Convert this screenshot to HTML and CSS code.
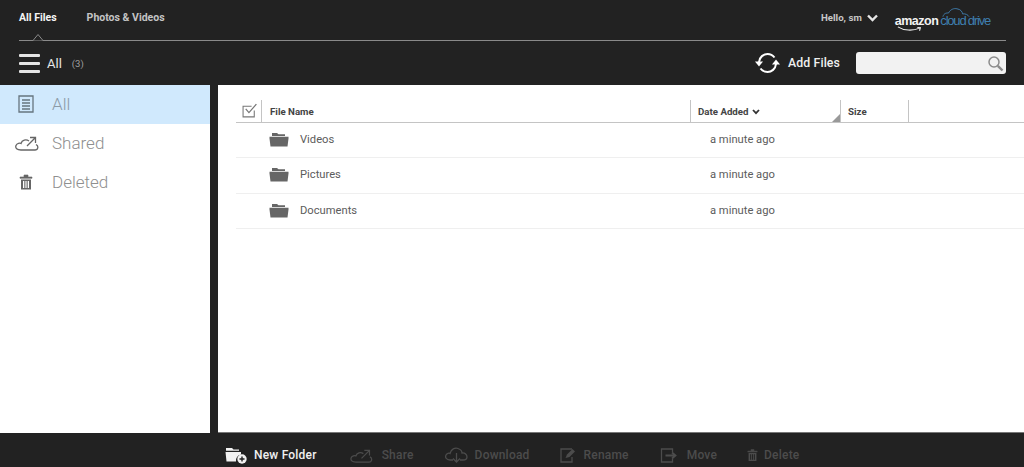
FILE: index.html
```html
<!DOCTYPE html>
<html lang="en">
<head>
<meta charset="utf-8">
<title>Amazon Cloud Drive</title>
<link rel="stylesheet" href="styles.css">
</head>
<body>
<div class="app">
  <header class="header">
    <div class="topbar">
      <nav class="tabs">
        <span class="tab tab-active">All Files</span>
        <span class="tab">Photos &amp; Videos</span>
      </nav>
      <div class="account">
        <span class="hello">Hello, sm</span>
        <svg class="chev" width="11" height="8" viewBox="0 0 11 8"><path d="M1 1.5l4.5 4.5L10 1.5" fill="none" stroke="#e6e6e6" stroke-width="2.4"/></svg>
        <span class="logo"><span class="logo-amazon">amazon</span><span class="logo-cloud">cloud drive</span>
          <svg class="logo-smile" width="30" height="8" viewBox="0 0 30 8"><path d="M1 1.5C8 6 18 6.500 26 3M23.500 2.200L27 2.500L26 6" fill="none" stroke="#f2f2f2" stroke-width="1.200"/></svg>
          <svg class="logo-arc" width="30" height="11" viewBox="0 0 30 11"><path d="M1 10C2 6 5 6 7 6C9 2 13 0.800 16 1.500C20 2 22 5 22 7C25 6.500 28 8 29 10" fill="none" stroke="#3f7fb0" stroke-width="1"/></svg>
        </span>
      </div>
      <svg class="notch" width="20" height="8" viewBox="0 0 20 8"><path d="M0 7.500H5L10 1.500L15 7.500H20" fill="#222" stroke="#8a8a8a" stroke-width="1"/></svg>
    </div>
    <div class="toolbar">
      <div class="crumb">
        <span class="burger"><i></i><i></i><i></i></span>
        <span class="crumb-title">All</span>
        <span class="crumb-count">(3)</span>
      </div>
      <div class="actions">
        <svg class="sync" width="25" height="22" viewBox="0 0 25 22"><g fill="none" stroke="#fff" stroke-width="2"><path d="M4 10C4.500 5 8.500 2 12.500 2C15.500 2 18 3.500 19.500 5.500"/><path d="M21 12C20.500 17 16.500 20 12.500 20C9.500 20 7 18.500 5.500 16.500"/></g><path d="M0 9.500H8L4 14.500Z" fill="#fff"/><path d="M25 12.500H17L21 7.500Z" fill="#fff"/></svg>
        <span class="add">Add Files</span>
        <div class="search">
          <svg width="17" height="17" viewBox="0 0 17 17"><circle cx="7" cy="7" r="5" fill="none" stroke="#8c8c8c" stroke-width="1.500"/><path d="M10.800 10.800L15.500 15.500" stroke="#8c8c8c" stroke-width="2.400"/></svg>
        </div>
      </div>
    </div>
  </header>
  <div class="body">
    <aside class="side">
      <div class="side-item side-active">
        <span class="side-icon"><svg width="16" height="18" viewBox="0 0 16 18"><path d="M1 1H15V17H1ZM4 5H12M4 8H12M4 11H12M4 14H12" fill="none" stroke="#66757f" stroke-width="1.300"/></svg></span>
        <span>All</span>
      </div>
      <div class="side-item">
        <span class="side-icon"><svg width="24" height="16" viewBox="0 0 24 16"><path d="M6 15H20C23 15 24 11 21 9.500M6 15C2 15 0 13 1 10.500C2 8 5 8 6 8.500C7 5 11 4 14 6M12 11L20 3M15 2.500H20.500V8" fill="none" stroke="#666" stroke-width="1.300"/></svg></span>
        <span>Shared</span>
      </div>
      <div class="side-item">
        <span class="side-icon"><svg width="14" height="16" viewBox="0 0 14 16"><path d="M1 3H13V4.300H1ZM5 3V1H9V3" fill="#666" stroke="#666" stroke-width=".6"/><path d="M2 5.500H12V15.500H2Z M4 7V14H5.300V7Z M6.400 7V14H7.600V7Z M8.700 7V14H10V7Z" fill="#666" fill-rule="evenodd"/></svg></span>
        <span>Deleted</span>
      </div>
    </aside>
    <main class="main">
      <div class="thead">
        <div class="th th-check"><svg width="16" height="15" viewBox="0 0 15 14"><path d="M11.500 7V13H1V3H9" fill="none" stroke="#777" stroke-width="1"/><path d="M3.500 5.500L6.500 9L13.500 1" fill="none" stroke="#777" stroke-width="1.200"/></svg></div>
        <div class="th th-name">File Name</div>
        <div class="th th-date">Date Added
          <svg class="sort" width="8" height="6" viewBox="0 0 8 6"><path d="M1 1L4 4.200L7 1" fill="none" stroke="#333" stroke-width="1.800"/></svg>
          <svg class="grip" width="8" height="8" viewBox="0 0 8 8"><path d="M8 0V8H0Z" fill="#999"/></svg>
        </div>
        <div class="th th-size">Size</div>
      </div>
      <div class="row"><span class="cell-name"><svg class="folder" width="20" height="15" viewBox="0 0 20 15"><use href="#folder"/></svg>Videos</span><span class="cell-date">a minute ago</span></div>
      <div class="row"><span class="cell-name"><svg class="folder" width="20" height="15" viewBox="0 0 20 15"><use href="#folder"/></svg>Pictures</span><span class="cell-date">a minute ago</span></div>
      <div class="row"><span class="cell-name"><svg class="folder" width="20" height="15" viewBox="0 0 20 15"><use href="#folder"/></svg>Documents</span><span class="cell-date">a minute ago</span></div>
    </main>
  </div>
  <footer class="footer">
    <div class="fbtn fbtn-on">
      <svg width="23" height="18" viewBox="0 0 23 18"><path d="M1 2H7L8.500 3.500H14V4.800H1ZM0.500 6H16V8.500A6 6 0 0 0 11 15.500H1.500Z" fill="#f2f2f2"/><circle cx="17" cy="13" r="4.700" fill="#f2f2f2"/><path d="M14.500 13H19.500M17 10.500V15.500" stroke="#222" stroke-width="1.400"/></svg>
      <span>New Folder</span>
    </div>
    <div class="fbtn fbtn-share">
      <svg width="23" height="15" viewBox="0 0 24 16"><path d="M6 15H20C23 15 24 11 21 9.500M6 15C2 15 0 13 1 10.500C2 8 5 8 6 8.500C7 5 11 4 14 6M12 11L20 3M15 2.500H20.500V8" fill="none" stroke="#4c4c4c" stroke-width="1.300"/></svg>
      <span>Share</span>
    </div>
    <div class="fbtn fbtn-download">
      <svg width="23" height="16" viewBox="0 0 23 16"><path d="M8 13H5C1 13 0 10 1 8C2 6 4 6 5 6.500C6 2 10 .5 13 1.500C16 2.500 17 5 17 6C20 5.500 22 8 22 10C22 12 20 13 18 13H15M11.500 6V15M8 11.500L11.500 15L15 11.500" fill="none" stroke="#4c4c4c" stroke-width="1.300"/></svg>
      <span>Download</span>
    </div>
    <div class="fbtn fbtn-rename">
      <svg width="17" height="15" viewBox="0 0 17 15"><path d="M12 1H1V14H12V9" fill="none" stroke="#4c4c4c" stroke-width="1.300"/><path d="M5.500 10L7 6.500L12.500 1L15 3.500L9.500 9Z" fill="#4c4c4c"/></svg>
      <span>Rename</span>
    </div>
    <div class="fbtn fbtn-move">
      <svg width="19" height="15" viewBox="0 0 18 15"><path d="M12 4V1H1V14H12V11" fill="none" stroke="#4c4c4c" stroke-width="1.300"/><path d="M5 7.500H14M11.500 4.500L15 7.500L11.500 10.500" fill="none" stroke="#4c4c4c" stroke-width="1.800"/></svg>
      <span>Move</span>
    </div>
    <div class="fbtn fbtn-delete">
      <svg width="11" height="14" viewBox="0 0 14 16"><path d="M1 3H13V4.300H1ZM5 3V1H9V3" fill="#4c4c4c" stroke="#4c4c4c" stroke-width=".6"/><path d="M2 5.500H12V15.500H2Z M4 7V14H5.300V7Z M6.400 7V14H7.600V7Z M8.700 7V14H10V7Z" fill="#4c4c4c" fill-rule="evenodd"/></svg>
      <span>Delete</span>
    </div>
  </footer>
</div>
<svg class="defs" width="0" height="0"><defs><g id="folder"><path d="M3 1H8L9.500 2.200H16V4H3Z" fill="#666"/><path d="M0.500 4.800H19.500V6.500L18.500 14.500H1.500L0.500 6.500Z" fill="#666"/></g></defs></svg>
</body>
</html>
```
FILE: styles.css
```css
* { box-sizing: border-box; }
html, body { margin: 0; height: 100%; }
body { font-family: Roboto, "Liberation Sans", sans-serif; background: #222; overflow: hidden; }
.app { width: 1024px; height: 467px; display: flex; flex-direction: column; background: #222; }

.header { height: 85px; flex: none; display: flex; flex-direction: column; }
.topbar { position: relative; height: 41px; margin: 0 18px 0 19px; display: flex; justify-content: space-between; border-bottom: 1px solid #8a8a8a; }
.tabs { display: flex; gap: 30px; padding-top: 11px; }
.tab { font-size: 10.5px; font-weight: 700; line-height: 13px; color: #c4c4c4; }
.tab-active { color: #f5f5f5; }
.notch { position: absolute; left: 9px; bottom: -1px; }
.account { display: flex; align-items: flex-start; padding-top: 12px; padding-right: 16px; }
.hello { font-size: 9.700px; font-weight: 700; line-height: 12px; color: #c8c8c8; }
.chev { margin: 2px 0 0 5px; }
.logo { position: relative; margin-left: 17px; display: flex; align-items: baseline; white-space: nowrap; height: 18px; line-height: 18px; }
.logo-amazon { font-family: "Liberation Sans", sans-serif; font-size: 12.500px; font-weight: 700; color: #f2f2f2; letter-spacing: -.5px; }
.logo-cloud { font-family: "Liberation Sans", sans-serif; font-size: 13px; color: #3f7fb0; margin-left: 2px; letter-spacing: -1.200px; }
.logo-smile { position: absolute; left: 2px; top: 13px; width: 26px; }
.logo-arc { position: absolute; left: 47px; top: -5px; width: 28px; }

.toolbar { flex: 1; display: flex; justify-content: space-between; align-items: center; padding: 0 18px 0 19px; }
.crumb { display: flex; align-items: center; }
.burger { display: flex; flex-direction: column; gap: 5px; width: 21px; }
.burger i { display: block; height: 3px; border-radius: 1px; background: #e4e4e4; }
.crumb-title { margin-left: 7px; font-size: 13px; font-weight: 400; color: #e6e6e6; }
.crumb-count { margin-left: 10px; font-size: 9.500px; color: #a0a0a0; }
.actions { display: flex; align-items: center; }
.add { margin-left: 8px; font-size: 12.300px; font-weight: 500; letter-spacing: .1px; color: #efefef; }
.search { width: 150px; height: 22px; margin-left: 16px; padding-right: 2px; border-radius: 3px; background: #f2f2f2; display: flex; justify-content: flex-end; align-items: center; }

.body { flex: 1; min-height: 0; display: flex; gap: 8px; }
.side { width: 210px; flex: none; background: #fff; }
.side-item { height: 39px; display: flex; align-items: center; padding: 0 0 2px 15px; font-size: 17px; font-weight: 300; color: #8f8f8f; }
.side-active { background: #d0e9fd; color: #8c9aa6; }
.side-icon { width: 37px; display: flex; justify-content: flex-start; }
.side-item:first-child .side-icon { padding-left: 3px; }
.side-item:last-child .side-icon { padding-left: 4px; }
.main { flex: 1; background: #fff; padding: 15px 0 0 18px; border-bottom: 1px solid #777; }
.thead { display: flex; height: 23px; border-bottom: 1px solid #c4c4c4; }
.th { position: relative; font-size: 9.700px; font-weight: 700; color: #444; line-height: 22px; border-right: 1px solid #c4c4c4; padding-top: 1px; padding-left: 7px; }
.th-check { width: 26px; padding: 3px 0 0 6px; line-height: 0; }
.th-name { width: 429px; padding-left: 8px; }
.th-date { width: 150px; }
.th-size { width: 68px; }
.sort { margin-left: 1px; }
.grip { position: absolute; right: 0; bottom: 0; }
.row { height: 35.340px; display: flex; align-items: center; padding-bottom: 1px; border-bottom: 1px solid #efefef; font-size: 11.200px; color: #5c5c5c; }
.cell-name { width: 474px; padding-left: 33px; display: flex; align-items: center; }
.folder { margin-right: 11px; }
.defs { position: absolute; }

.footer { height: 34px; flex: none; display: flex; align-items: center; padding: 10px 0 0 225px; font-size: 12px; font-weight: 500; letter-spacing: .2px; color: #4c4c4c; }
.fbtn { display: flex; align-items: center; gap: 7px; }
.fbtn-on { color: #f0f0f0; gap: 6px; }
.fbtn-share { margin-left: 33px; gap: 9px; }
.fbtn-download { margin-left: 31px; }
.fbtn-rename { margin-left: 30px; }
.fbtn-move { margin-left: 31px; gap: 8px; }
.fbtn-delete { margin-left: 30px; gap: 6px; }
```
